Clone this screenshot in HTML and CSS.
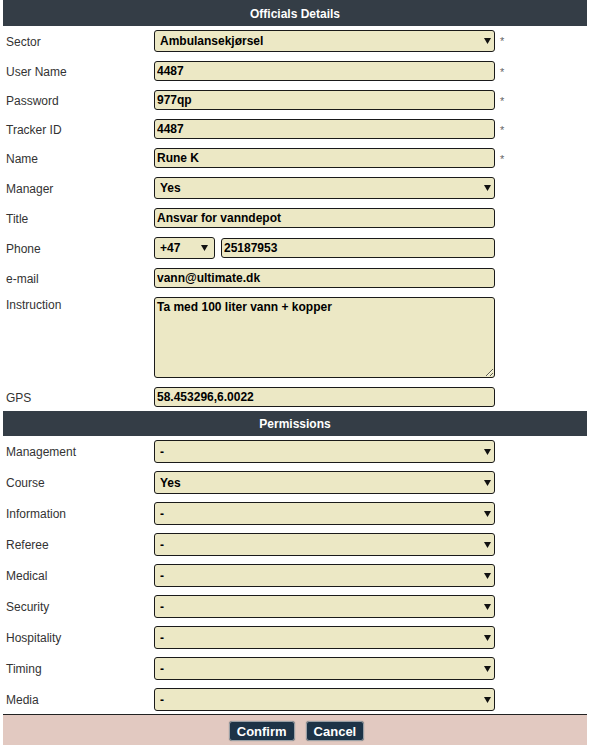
FILE: index.html
```html
<!DOCTYPE html>
<html>
<head>
<meta charset="utf-8">
<link rel="stylesheet" href="styles.css">
</head>
<body>
<div class="panel">
  <div class="bar">Officials Details</div>
  <div class="section details">
    <div class="row">
      <label class="lbl">Sector</label>
      <div class="sel tall"><select><option>Ambulansekjørsel</option></select><svg class="arrow" viewBox="0 0 7 7"><path d="M0 1h7L3.5 7z"/></svg></div>
      <span class="req">*</span>
    </div>
    <div class="row">
      <label class="lbl">User Name</label>
      <input class="txt" value="4487">
      <span class="req">*</span>
    </div>
    <div class="row">
      <label class="lbl">Password</label>
      <input class="txt" value="977qp">
      <span class="req">*</span>
    </div>
    <div class="row">
      <label class="lbl">Tracker ID</label>
      <input class="txt" value="4487">
      <span class="req">*</span>
    </div>
    <div class="row">
      <label class="lbl">Name</label>
      <input class="txt" value="Rune K">
      <span class="req">*</span>
    </div>
    <div class="row">
      <label class="lbl">Manager</label>
      <div class="sel tall"><select><option>Yes</option></select><svg class="arrow" viewBox="0 0 7 7"><path d="M0 1h7L3.5 7z"/></svg></div>
    </div>
    <div class="row">
      <label class="lbl">Title</label>
      <input class="txt" value="Ansvar for vanndepot">
    </div>
    <div class="row">
      <label class="lbl">Phone</label>
      <div class="phone">
        <div class="sel tall code"><select><option>+47</option></select><svg class="arrow" viewBox="0 0 7 7"><path d="M0 1h7L3.5 7z"/></svg></div>
        <input class="txt num" value="25187953">
      </div>
    </div>
    <div class="row">
      <label class="lbl">e-mail</label>
      <input class="txt" value="vann@ultimate.dk">
    </div>
    <div class="row top">
      <label class="lbl">Instruction</label>
      <textarea class="area">Ta med 100 liter vann + kopper</textarea>
    </div>
    <div class="row">
      <label class="lbl">GPS</label>
      <input class="txt" value="58.453296,6.0022">
    </div>
  </div>
  <div class="bar">Permissions</div>
  <div class="section perms">
    <div class="row"><label class="lbl">Management</label><div class="sel"><select><option>-</option></select><svg class="arrow" viewBox="0 0 7 7"><path d="M0 1h7L3.5 7z"/></svg></div></div>
    <div class="row"><label class="lbl">Course</label><div class="sel"><select><option>Yes</option></select><svg class="arrow" viewBox="0 0 7 7"><path d="M0 1h7L3.5 7z"/></svg></div></div>
    <div class="row"><label class="lbl">Information</label><div class="sel"><select><option>-</option></select><svg class="arrow" viewBox="0 0 7 7"><path d="M0 1h7L3.5 7z"/></svg></div></div>
    <div class="row"><label class="lbl">Referee</label><div class="sel"><select><option>-</option></select><svg class="arrow" viewBox="0 0 7 7"><path d="M0 1h7L3.5 7z"/></svg></div></div>
    <div class="row"><label class="lbl">Medical</label><div class="sel"><select><option>-</option></select><svg class="arrow" viewBox="0 0 7 7"><path d="M0 1h7L3.5 7z"/></svg></div></div>
    <div class="row"><label class="lbl">Security</label><div class="sel"><select><option>-</option></select><svg class="arrow" viewBox="0 0 7 7"><path d="M0 1h7L3.5 7z"/></svg></div></div>
    <div class="row"><label class="lbl">Hospitality</label><div class="sel"><select><option>-</option></select><svg class="arrow" viewBox="0 0 7 7"><path d="M0 1h7L3.5 7z"/></svg></div></div>
    <div class="row"><label class="lbl">Timing</label><div class="sel"><select><option>-</option></select><svg class="arrow" viewBox="0 0 7 7"><path d="M0 1h7L3.5 7z"/></svg></div></div>
    <div class="row"><label class="lbl">Media</label><div class="sel"><select><option>-</option></select><svg class="arrow" viewBox="0 0 7 7"><path d="M0 1h7L3.5 7z"/></svg></div></div>
  </div>
  <div class="footer">
    <button class="btn">Confirm</button>
    <button class="btn">Cancel</button>
  </div>
</div>
</body>
</html>
```

FILE: styles.css
```css
html, body {
  margin: 0;
  padding: 0;
  background: #fff;
  font-family: "Liberation Sans", Arial, sans-serif;
  font-size: 12px;
  color: #333;
}

.panel {
  margin: 0 2px 0 3px;
  height: 745px;
  display: flex;
  flex-direction: column;
}

.bar {
  background: #343d46;
  color: #fff;
  font-weight: bold;
  font-size: 12px;
  text-align: center;
  height: 26px;
  line-height: 28px;
}

.section {
  display: flex;
  flex-direction: column;
  padding-left: 3px;
}

.details {
  gap: 9px;
  padding-top: 4px;
  padding-bottom: 4px;
}

.perms {
  gap: 8px;
  padding-top: 4px;
  padding-bottom: 3px;
}

.details + .bar {
  height: 25px;
  line-height: 26px;
}

.row {
  display: flex;
  align-items: center;
}

.row.top {
  align-items: flex-start;
}

.lbl {
  width: 148px;
  flex: none;
  color: #333;
  font-size: 12px;
  padding-top: 1px;
}

.row.top .lbl {
  padding-top: 1px;
}

.txt, .area, .sel select {
  box-sizing: border-box;
  background: #ece8c5;
  border: 1px solid #1a1a1a;
  border-radius: 3px;
  font-family: "Liberation Sans", Arial, sans-serif;
  font-weight: bold;
  font-size: 12px;
  color: #000;
  margin: 0;
  outline: none;
}

.txt {
  width: 341px;
  height: 20px;
  padding: 0 2px;
}

.area {
  width: 341px;
  height: 81px;
  padding: 2px 2px;
  resize: vertical;
  display: block;
}

.sel {
  position: relative;
  width: 341px;
  height: 23px;
}

.sel.tall {
  height: 22px;
}

.sel select {
  -webkit-appearance: none;
  appearance: none;
  width: 100%;
  height: 100%;
  padding: 0 0 0 5px;
  display: block;
}

.sel .arrow {
  position: absolute;
  right: 4px;
  top: 50%;
  width: 7px;
  height: 7px;
  margin-top: -4px;
  fill: #111;
  pointer-events: none;
}

.phone {
  display: flex;
  align-items: center;
  gap: 6px;
}

.sel.code {
  width: 61px;
}

.sel.code .arrow {
  right: 7px;
}

.txt.num {
  width: 274px;
}

.req {
  align-self: flex-start;
  margin-left: 5px;
  margin-top: 6px;
  font-size: 11px;
  color: #666;
  line-height: 10px;
}

.footer {
  flex: 1;
  background: #e2c9c1;
  border-top: 1px solid #222;
  display: flex;
  justify-content: center;
  align-items: flex-start;
  gap: 11px;
  padding-top: 6px;
  padding-left: 3px;
}

.btn {
  background: #1d3347;
  color: #fff;
  font-family: "Liberation Sans", Arial, sans-serif;
  font-weight: bold;
  font-size: 13px;
  height: 20px;
  padding: 0 7px;
  border: 1px solid #9aa0a6;
  border-radius: 3px;
  box-shadow: 0 0 1px #666;
  line-height: 17px;
}
```
